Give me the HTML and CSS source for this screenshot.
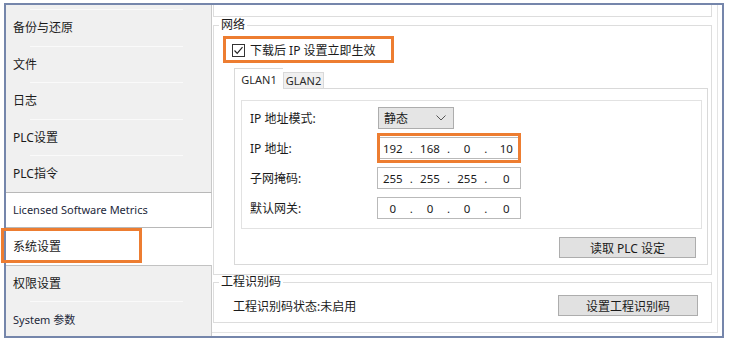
FILE: index.html
```html
<!DOCTYPE html>
<html lang="zh-CN">

<head>
    <meta charset="UTF-8">
    <meta name="viewport" content="width=device-width, initial-scale=1.0">
    <title>系统设置</title>
    <link rel="stylesheet" href="styles.css">
</head>

<body>
    <div class="frame">
        <div class="sidebar">
            <div class="nav-top"></div>
            <div class="nav-item">备份与还原</div>
            <div class="nav-item">文件</div>
            <div class="nav-item">日志</div>
            <div class="nav-item">PLC设置</div>
            <div class="nav-item">PLC指令</div>
            <div class="nav-item boxed small">Licensed Software Metrics</div>
            <div class="nav-item active">系统设置</div>
            <div class="nav-item after-active">权限设置</div>
            <div class="nav-item small">System 参数</div>
        </div>

        <div class="content">
            <div class="panel">
                <div class="prev-group"></div>

                <fieldset class="group">
                    <legend>网络</legend>
                    <div class="group-body net-body">
                        <label class="check-row">
                            <svg class="checkbox" width="13" height="13" viewBox="0 0 13 13">
                                <rect x="0.5" y="0.5" width="12" height="12" fill="#fff" stroke="#333" />
                                <polyline points="2.5,6.5 5.2,9.3 10.5,3.2" fill="none" stroke="#222" stroke-width="1.2" />
                            </svg>
                            下载后 IP 设置立即生效
                        </label>

                        <div class="tabs">
                            <div class="tab selected">GLAN1</div>
                            <div class="tab">GLAN2</div>
                        </div>
                        <div class="tab-panel">
                            <div class="ip-box">
                                <div class="row">
                                    <span class="label">IP 地址模式:</span>
                                    <div class="select">
                                        <span>静态</span>
                                        <svg width="10" height="6" viewBox="0 0 10 6">
                                            <polyline points="0.5,0.5 5,5 9.5,0.5" fill="none" stroke="#555" stroke-width="1" />
                                        </svg>
                                    </div>
                                </div>
                                <div class="row">
                                    <span class="label">IP 地址:</span>
                                    <div class="ip-input">
                                        <span class="oct">192</span><span class="dot">.</span>
                                        <span class="oct">168</span><span class="dot">.</span>
                                        <span class="oct">0</span><span class="dot">.</span>
                                        <span class="oct last">10</span>
                                    </div>
                                </div>
                                <div class="row">
                                    <span class="label">子网掩码:</span>
                                    <div class="ip-input">
                                        <span class="oct">255</span><span class="dot">.</span>
                                        <span class="oct">255</span><span class="dot">.</span>
                                        <span class="oct">255</span><span class="dot">.</span>
                                        <span class="oct last">0</span>
                                    </div>
                                </div>
                                <div class="row">
                                    <span class="label">默认网关:</span>
                                    <div class="ip-input">
                                        <span class="oct">0</span><span class="dot">.</span>
                                        <span class="oct">0</span><span class="dot">.</span>
                                        <span class="oct">0</span><span class="dot">.</span>
                                        <span class="oct last">0</span>
                                    </div>
                                </div>
                            </div>
                            <div class="btn-row">
                                <button class="btn read-btn">读取 PLC 设定</button>
                            </div>
                        </div>
                    </div>
                </fieldset>

                <fieldset class="group code-group">
                    <legend>工程识别码</legend>
                    <div class="group-body code-body">
                        <span>工程识别码状态:未启用</span>
                        <button class="btn code-btn">设置工程识别码</button>
                    </div>
                </fieldset>
            </div>
        </div>
    </div>

    <!-- highlight boxes drawn over the screenshot -->
    <div class="mark mark-check"></div>
    <div class="mark mark-ip"></div>
    <div class="mark mark-nav"></div>
</body>

</html>
```

FILE: styles.css
```css
body {
    margin: 0;
    padding: 0;
    background-color: white;
    font-family: "Noto Sans", "Noto Sans CJK SC", sans-serif;
    font-size: 12px;
    color: #1b1b1b;
}

.frame {
    display: flex;
    margin: 3px 0 0 4px;
    width: 716px;
    height: 331px;
    border: 2px solid #7586ab;
    overflow: hidden;
    background-color: white;
}

/* left menu */

.sidebar {
    width: 206px;
    flex-shrink: 0;
    overflow: hidden;
}

.nav-top {
    height: 4px;
    background-color: #f0f0f0;
    border-right: 1px solid #c9c9c9;
}

.nav-item {
    position: relative;
    box-sizing: border-box;
    height: 36.5px;
    display: flex;
    align-items: center;
    padding-left: 7px;
    background-color: #f0f0f0;
    border-right: 1px solid #c9c9c9;
}

.nav-item::before {
    content: "";
    position: absolute;
    top: 0;
    left: 24px;
    width: 153px;
    border-top: 1px solid #fafafa;
}

.nav-item.small {
    font-size: 11px;
    color: #23283a;
}

.nav-item.boxed {
    background-color: white;
    border-top: 1px solid #b8b8b8;
    border-bottom: 1px solid #b8b8b8;
}

.nav-item.active {
    background-color: white;
    border-right-color: white;
}

.nav-item.after-active {
    border-top: 1px solid #c2c2c2;
}

.nav-item.boxed::before,
.nav-item.active::before,
.nav-item.after-active::before {
    display: none;
}

/* right side */

.content {
    flex: 1;
    display: flex;
    padding: 0 4px 3px 0;
}

.panel {
    flex: 1;
    padding: 0 5px 0 1px;
    border-right: 1px solid #e4e4e4;
    border-bottom: 1px solid #e4e4e4;
}

.prev-group {
    height: 11px;
    border: 1px solid #dddddd;
    border-top: none;
}

.group {
    margin: 0;
    padding: 0;
    border: 1px solid #dddddd;
    min-width: 0;
}

.group legend {
    margin-left: 5px;
    padding: 0 2px;
    line-height: 16px;
}

.net-body {
    padding: 4px 3px 9px 18px;
}

.check-row {
    display: flex;
    align-items: center;
    height: 26px;
    gap: 5px;
}

.checkbox {
    flex-shrink: 0;
}

.tabs {
    display: flex;
    align-items: flex-end;
    height: 20px;
    margin: 5px 0 0 2px;
    font-size: 11px;
}

.tab {
    box-sizing: border-box;
    height: 16px;
    width: 41px;
    display: flex;
    align-items: center;
    justify-content: center;
    background-color: #f0f0f0;
    border: 1px solid #d9d9d9;
    border-bottom: none;
    color: #2a2a2a;
}

.tab.selected {
    position: relative;
    z-index: 1;
    width: 49px;
    height: 21px;
    margin-bottom: -1px;
    background-color: white;
    border-right: none;
}

.tab-panel {
    margin-left: 2px;
    padding: 11px 5px 6px 6px;
    border: 1px solid #d9d9d9;
}

.ip-box {
    display: flex;
    flex-direction: column;
    gap: 8px;
    padding: 6px 0 9px 8px;
    border: 1px solid #e2e2e2;
}

.row {
    display: flex;
    align-items: center;
    height: 22px;
}

.label {
    width: 127px;
}

.select {
    box-sizing: border-box;
    display: flex;
    align-items: center;
    justify-content: space-between;
    width: 76px;
    height: 22px;
    margin-left: 1px;
    padding: 0 7px 0 5px;
    background-color: #e5e5e5;
    border: 1px solid #adadad;
}

.ip-input {
    box-sizing: border-box;
    display: flex;
    align-items: center;
    width: 144px;
    height: 22px;
    padding-left: 3px;
    border: 1px solid #b9b9b9;
    font-size: 11.5px;
}

.oct {
    width: 24px;
    text-align: center;
}

.oct.last {
    width: 28px;
}

.dot {
    width: 14px;
    text-align: center;
}

.btn-row {
    display: flex;
    justify-content: flex-end;
    margin-top: 8px;
    padding-right: 6px;
}

.btn {
    box-sizing: border-box;
    height: 21px;
    padding: 0;
    font-family: inherit;
    font-size: 12px;
    color: #1b1b1b;
    background-color: #e1e1e1;
    border: 1px solid #adadad;
}

.read-btn {
    width: 137px;
}

.code-group legend {
    line-height: 14px;
}

.code-body {
    display: flex;
    align-items: center;
    justify-content: space-between;
    padding: 6px 13px 6px 19px;
}

.code-btn {
    width: 140px;
}

/* orange annotation boxes */

.mark {
    position: absolute;
    box-sizing: border-box;
    border: 3px solid #ed7d31;
}

.mark-check {
    left: 223px;
    top: 36px;
    width: 171px;
    height: 27px;
}

.mark-ip {
    left: 377px;
    top: 133px;
    width: 144px;
    height: 30px;
}

.mark-nav {
    left: 1px;
    top: 228px;
    width: 141px;
    height: 35px;
}
```
